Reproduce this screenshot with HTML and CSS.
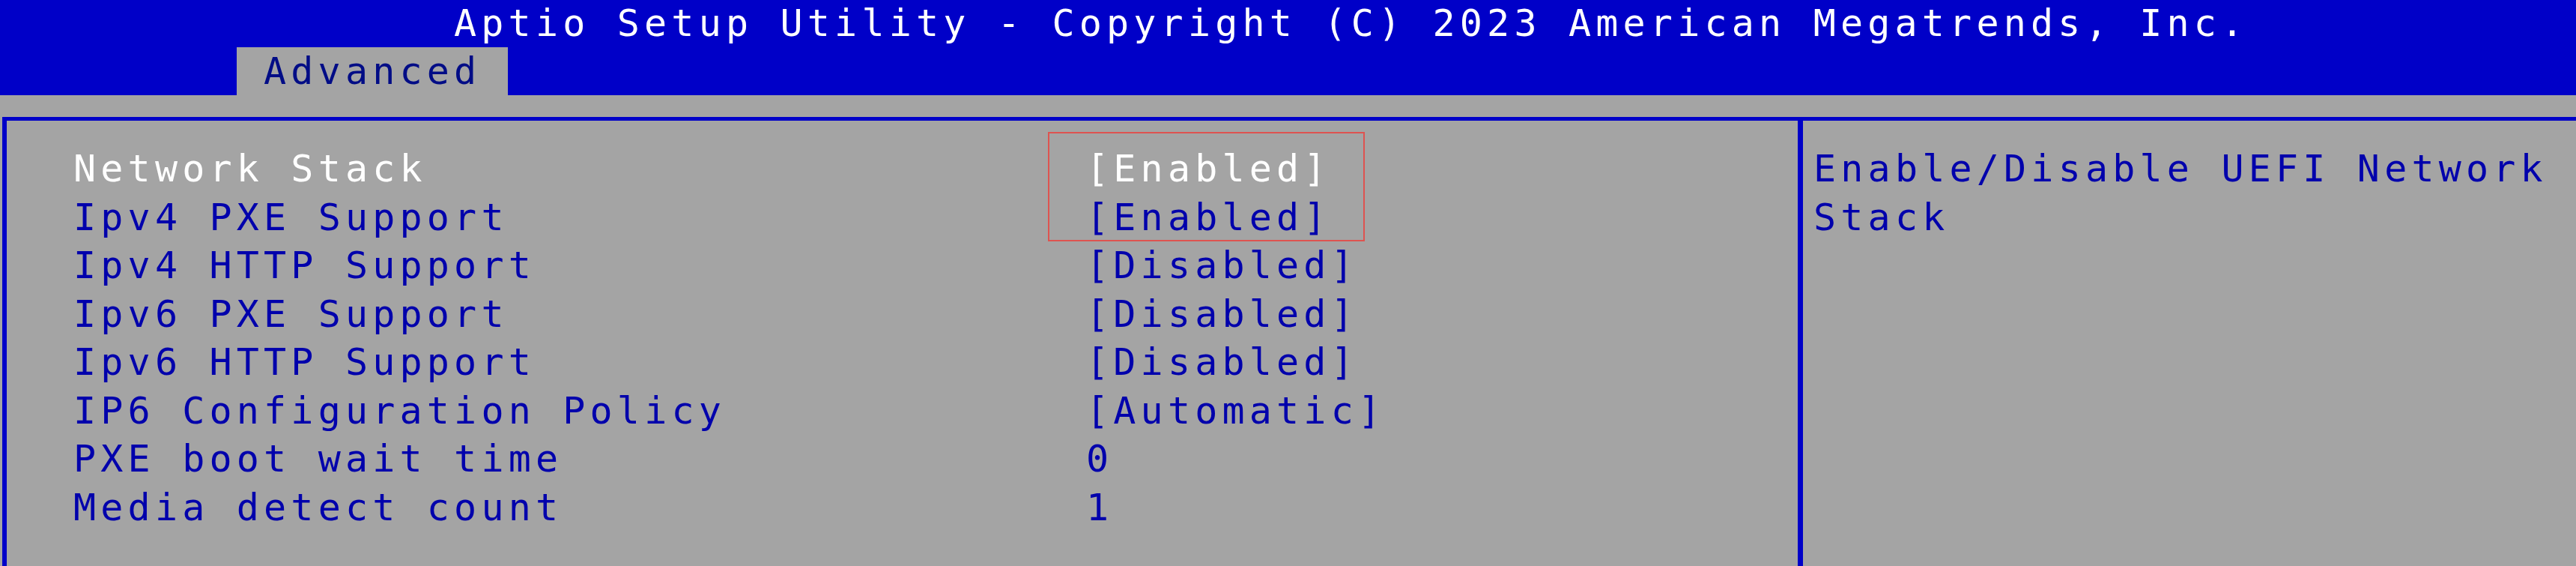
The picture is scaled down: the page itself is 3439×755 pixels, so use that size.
FILE: index.html
```html
<!DOCTYPE html>
<html lang="en">
<head>
<meta charset="utf-8">
<title>Aptio Setup Utility - Advanced</title>
<link rel="stylesheet" href="styles.css">
</head>
<body>
<div class="screen">
  <header class="topbar">
    <div class="title">Aptio Setup Utility - Copyright (C) 2023 American Megatrends, Inc.</div>
    <nav class="tabs"><span class="tab">Advanced</span></nav>
  </header>
  <div class="band"></div>
  <main class="panel">
    <section class="settings">
      <div class="row selected"><span class="label">Network Stack</span><span class="value">[Enabled]</span></div>
      <div class="row"><span class="label">Ipv4 PXE Support</span><span class="value">[Enabled]</span></div>
      <div class="row"><span class="label">Ipv4 HTTP Support</span><span class="value">[Disabled]</span></div>
      <div class="row"><span class="label">Ipv6 PXE Support</span><span class="value">[Disabled]</span></div>
      <div class="row"><span class="label">Ipv6 HTTP Support</span><span class="value">[Disabled]</span></div>
      <div class="row"><span class="label">IP6 Configuration Policy</span><span class="value">[Automatic]</span></div>
      <div class="row"><span class="label">PXE boot wait time</span><span class="value">0</span></div>
      <div class="row"><span class="label">Media detect count</span><span class="value">1</span></div>
    </section>
    <aside class="help">Enable/Disable UEFI Network Stack</aside>
  </main>
  <div class="mark"></div>
</div>
</body>
</html>
```
FILE: styles.css
```css
* {
  box-sizing: border-box;
  margin: 0;
  padding: 0;
}

html, body {
  width: 3439px;
  height: 755px;
  overflow: hidden;
  background: #a4a4a4;
}

body {
  font-family: "DejaVu Sans Mono", "Liberation Mono", monospace;
  font-size: 50px;
  letter-spacing: 6.19px;
}

.screen {
  position: relative;
  width: 3439px;
  height: 755px;
  overflow: hidden;
  background: #a4a4a4;
}

.topbar {
  background: #0000c8;
  height: 127px;
}

.title {
  height: 63px;
  line-height: 63px;
  color: #ffffff;
  padding-left: 606px;
  white-space: pre;
}

.tabs {
  display: flex;
  height: 64px;
  padding-left: 316px;
}

.tab {
  width: 362px;
  height: 64px;
  background: #a4a4a4;
  color: #000c86;
  line-height: 64px;
  padding-left: 36px;
  white-space: pre;
}

.band {
  height: 29px;
}

.panel {
  display: flex;
  margin-left: 3px;
  height: 599px;
  border-top: 5px solid #0000c8;
  border-left: 6px solid #0000c8;
}

.settings {
  width: 2398px;
  flex: none;
  border-right: 7px solid #0000c8;
  padding-top: 32px;
  padding-left: 89px;
}

.row {
  display: grid;
  grid-template-columns: 1352px auto;
  height: 64.5px;
  line-height: 64.5px;
  color: #0000ac;
  white-space: pre;
}

.row.selected {
  color: #ffffff;
}

.help {
  flex: 1;
  padding-top: 32px;
  padding-left: 14px;
  line-height: 64.5px;
  color: #0000ac;
}

.mark {
  position: absolute;
  left: 1399px;
  top: 176px;
  width: 423px;
  height: 146px;
  border: 2px solid #de5350;
}
```
